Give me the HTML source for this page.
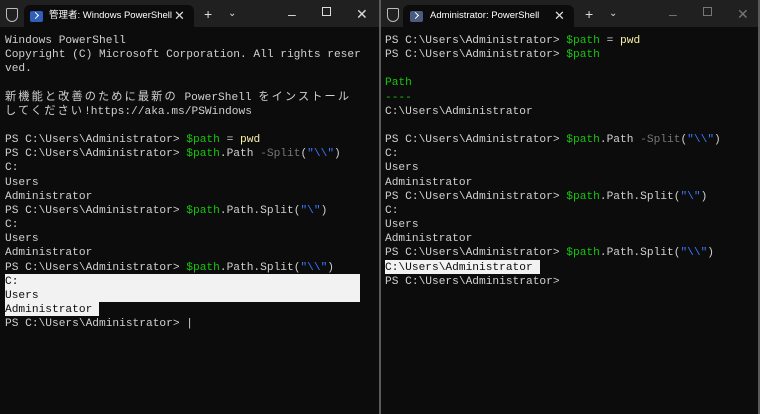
<!DOCTYPE html>
<html><head><meta charset="utf-8"><style>
*{margin:0;padding:0;box-sizing:border-box}
body{width:760px;height:414px;background:#0c0c0c;overflow:hidden;position:relative;font-family:"Liberation Sans",sans-serif}
.win{position:absolute;top:0;height:414px;background:#0c0c0c}
.tb{position:absolute;left:0;top:0;right:0;height:27px;background:#202020}
.tab{position:absolute;top:5px;height:22px;background:#0c0c0c;border-radius:6px 6px 0 0;color:#fff;font-size:9.5px;line-height:22px}
.ico{position:absolute;top:6px;width:13px;height:11px;background:#2f5fb8;border-radius:2px}
.ico:after{content:"";position:absolute;left:3px;top:2px;width:4px;height:4px;border-right:1.5px solid #fff;border-bottom:1.5px solid #fff;transform:rotate(-45deg)}
.sh{position:absolute;left:6px;top:8px;width:12px;height:14px;border:1.5px solid #bbb;border-radius:2px 2px 7px 7px}
.g{position:absolute;top:4px;color:#ddd;font-size:14px;line-height:20px}
pre{position:absolute;top:34px;font-family:"Liberation Mono","Noto Sans CJK JP",monospace;font-size:11.2px;line-height:14.15px;color:#d0d0d0;white-space:pre}
.j{letter-spacing:2.1px}
.gr{color:#16c60c}.y{color:#f9f1a5}.b{color:#3b78ff}.d{color:#767676}
.hl{position:absolute;background:#f2f2f2}
.hlt{color:#0c0c0c}
</style></head><body>
<div class="win" style="left:0;width:380px">
 <div class="tb"></div>
 <div class="sh"></div>
 <div class="tab" style="left:24px;width:170px"><div class="ico" style="left:6px"></div><span style="position:absolute;left:25px;font-family:'Liberation Sans','Noto Sans CJK JP',sans-serif">管理者: Windows PowerShell</span><span style="position:absolute;left:150px;font-size:13px;color:#ddd">✕</span></div>
 <div class="g" style="left:204px">+</div><div class="g" style="left:228px;font-size:10px">⌄</div>
 <div class="g" style="left:288px">–</div><div class="g" style="left:322px;top:7px;width:9px;height:9px;border:1.3px solid #ddd"></div><div class="g" style="left:356px">✕</div>
 <div class="hl" style="left:5px;top:274px;width:355px;height:28px"></div>
 <div class="hl" style="left:5px;top:302px;width:94px;height:14px"></div>
<pre style="left:5px">Windows PowerShell
Copyright (C) Microsoft Corporation. All rights reser
ved.

<span class="j">新機能と改善のために最新の</span> PowerShell <span class="j">をインストール</span>
<span class="j">してください</span>!https://aka.ms/PSWindows

PS C:\Users\Administrator&gt; <span class="gr">$path</span> = <span class="y">pwd</span>
PS C:\Users\Administrator&gt; <span class="gr">$path</span>.Path <span class="d">-Split</span>(<span class="b">"\\"</span>)
C:
Users
Administrator
PS C:\Users\Administrator&gt; <span class="gr">$path</span>.Path.Split(<span class="b">"\"</span>)
C:
Users
Administrator
PS C:\Users\Administrator&gt; <span class="gr">$path</span>.Path.Split(<span class="b">"\\"</span>)
<span class="hlt">C:
Users
Administrator</span>
PS C:\Users\Administrator&gt; |</pre>
</div>
<div style="position:absolute;left:379px;top:0;width:2px;height:414px;background:#5a5a5a"></div>
<div class="win" style="left:381px;width:377px">
 <div class="tb"></div>
 <div class="sh" style="left:6px"></div>
 <div class="tab" style="left:22px;width:171px"><div class="ico" style="left:7px;background:#4a5a80"></div><span style="position:absolute;left:27px">Administrator: PowerShell</span><span style="position:absolute;left:151px;font-size:13px;color:#ddd">✕</span></div>
 <div class="g" style="left:204px">+</div><div class="g" style="left:228px;font-size:10px">⌄</div>
 <div class="g" style="left:288px;color:#777">–</div><div class="g" style="left:322px;top:7px;width:9px;height:9px;border:1.3px solid #777"></div><div class="g" style="left:356px;color:#777">✕</div>
 <div class="hl" style="left:4px;top:260px;width:155px;height:14px"></div>
<pre style="left:4px">PS C:\Users\Administrator&gt; <span class="gr">$path</span> = <span class="y">pwd</span>
PS C:\Users\Administrator&gt; <span class="gr">$path</span>

<span class="gr">Path</span>
<span class="gr">----</span>
C:\Users\Administrator

PS C:\Users\Administrator&gt; <span class="gr">$path</span>.Path <span class="d">-Split</span>(<span class="b">"\\"</span>)
C:
Users
Administrator
PS C:\Users\Administrator&gt; <span class="gr">$path</span>.Path.Split(<span class="b">"\"</span>)
C:
Users
Administrator
PS C:\Users\Administrator&gt; <span class="gr">$path</span>.Path.Split(<span class="b">"\\"</span>)
<span class="hlt">C:\Users\Administrator</span>
PS C:\Users\Administrator&gt;</pre>
</div>
<div style="position:absolute;left:758px;top:0;width:2px;height:414px;background:#5a5a5a"></div>
</body></html>
